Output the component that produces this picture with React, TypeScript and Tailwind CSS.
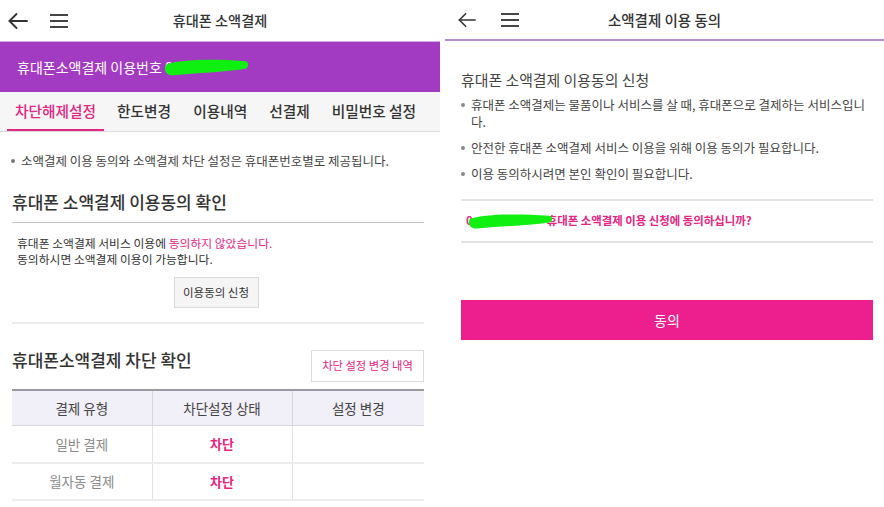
import React from "react";

const font = { fontFamily: '"Noto Sans CJK KR", "Noto Sans", sans-serif' };

function BackArrow({ w = 20 }: { w?: number }) {
  return (
    <svg width={w} height="16" viewBox="0 0 20 16" fill="none" stroke="#333" strokeWidth="1.8" strokeLinecap="round" strokeLinejoin="round">
      <path d="M19 8H1.5" />
      <path d="M8.5 1L1.5 8l7 7" />
    </svg>
  );
}

function Burger() {
  return (
    <svg width="18" height="14" viewBox="0 0 18 14" fill="none" stroke="#444" strokeWidth="1.8">
      <path d="M0 1h18M0 7h18M0 13h18" />
    </svg>
  );
}

// green marker blob that hides the phone number in the screenshot
function Redact({ w, h }: { w: number; h: number }) {
  return (
    <svg width={w} height={h} viewBox="0 0 100 24" preserveAspectRatio="none" className="absolute left-0 top-0">
      <path
        d="M4 9C20 3 55 2 96 5c4 1 4 7 0 9C70 18 40 19 12 22C3 23 0 14 4 9z"
        fill="#10f010"
      />
    </svg>
  );
}

function LeftScreen() {
  const tabs = ["차단해제설정", "한도변경", "이용내역", "선결제", "비밀번호 설정"];
  return (
    <div className="flex w-[440px] flex-col">
      <header className="flex h-[41px] items-center">
        <div className="flex w-[100px] items-center gap-[22px] pl-[8px]">
          <BackArrow />
          <Burger />
        </div>
        <h1 className="flex-1 text-center text-[14.2px] font-medium text-[#333]">휴대폰 소액결제</h1>
        <div className="w-[100px]" />
      </header>

      <div className="flex h-[51px] items-center border-t border-[#d9a6e6] bg-[#a33ac2] pl-[17px]">
        <span className="text-[14px] text-white">휴대폰소액결제 이용번호 0</span>
        <span className="relative -ml-[10px] h-[20px] w-[86px]">
          <Redact w={86} h={20} />
        </span>
      </div>

      <nav className="flex h-[40px] items-stretch border-b border-[#dcdcdc] bg-[#f6f6f6] pl-[7px]">
        {tabs.map((t, i) => (
          <div
            key={t}
            className={`flex items-center text-[14.7px] font-medium ${
              i === 0
                ? "mr-[13px] border-b-[2px] border-[#e5257f] px-[8px] pt-[2px] text-[#e5257f]"
                : "mr-[22px] text-[#333]"
            }`}
          >
            {t}
          </div>
        ))}
      </nav>

      <div className="flex flex-col pl-[12px] pr-[16px]">
        <p className="mt-[20px] flex items-center text-[12.5px] text-[#444]">
          <span className="ml-[-1px] mr-[6px] h-[4px] w-[4px] rounded-full bg-[#777]" />
          소액결제 이용 동의와 소액결제 차단 설정은 휴대폰번호별로 제공됩니다.
        </p>

        <h2 className="mt-[18px] text-[17px] font-medium leading-[26px] text-[#333]">휴대폰 소액결제 이용동의 확인</h2>
        <div className="mt-[7px] h-px bg-[#c4c4c4]" />
        <div className="mt-[12px] pl-[5px] text-[11.8px] leading-[16px] text-[#333]">
          <p>
            휴대폰 소액결제 서비스 이용에 <span className="text-[#e5257f]">동의하지 않았습니다.</span>
          </p>
          <p>동의하시면 소액결제 이용이 가능합니다.</p>
        </div>
        <div className="mt-[10px] flex justify-center">
          <button className="ml-[-4px] h-[31px] w-[85px] border border-[#dadada] bg-[#f5f5f5] text-[11.5px] text-[#333]">
            이용동의 신청
          </button>
        </div>
        <div className="mt-[14px] h-[2px] bg-[#ececec]" />

        <div className="mt-[24px] flex items-center justify-between">
          <h2 className="pb-[12px] text-[17px] font-medium leading-[24px] text-[#333]">휴대폰소액결제 차단 확인</h2>
          <button className="h-[32px] w-[113px] border border-[#dcdcdc] bg-white text-[11.3px] text-[#e5257f]">
            차단 설정 변경 내역
          </button>
        </div>

        <table className="mt-[5px] w-full border-collapse border-t-[2px] border-[#9a9a9a] text-[13.5px]">
          <thead>
            <tr className="h-[36px] bg-[#f1eff8] text-[#444]">
              <th className="w-[140px] border-b border-r border-[#d6d6de] font-normal">결제 유형</th>
              <th className="w-[140px] border-b border-r border-[#d6d6de] font-normal">차단설정 상태</th>
              <th className="border-b border-[#d6d6de] font-normal">설정 변경</th>
            </tr>
          </thead>
          <tbody>
            {["일반 결제", "월자동 결제"].map((r) => (
              <tr key={r} className="h-[37px] border-b-[2px] border-[#ececec]">
                <td className="border-r border-[#e2e2e2] text-center text-[#8a8a8a]">{r}</td>
                <td className="border-r border-[#e2e2e2] text-center text-[13px] font-bold text-[#e5257f]">차단</td>
                <td />
              </tr>
            ))}
          </tbody>
        </table>
      </div>
    </div>
  );
}

function RightScreen() {
  const bullets = [
    "휴대폰 소액결제는 물품이나 서비스를 살 때, 휴대폰으로 결제하는 서비스입니다.",
    "안전한 휴대폰 소액결제 서비스 이용을 위해 이용 동의가 필요합니다.",
    "이용 동의하시려면 본인 확인이 필요합니다.",
  ];
  return (
    <div className="ml-[5px] flex flex-1 flex-col">
      <header className="flex h-[41px] items-center border-b-[2px] border-[#b68fcb]">
        <div className="flex w-[100px] items-center gap-[25px] pl-[13px]">
          <BackArrow w={18} />
          <Burger />
        </div>
        <h1 className="flex-1 text-center text-[14.5px] font-medium text-[#333]">소액결제 이용 동의</h1>
        <div className="w-[100px]" />
      </header>

      <div className="flex flex-col pl-[16px] pr-[11px]">
        <h2 className="mt-[28px] text-[14.9px] leading-[22px] text-[#444]">휴대폰 소액결제 이용동의 신청</h2>
        <ul className="mt-[5px] flex flex-col gap-[9px] text-[12.5px] leading-[17px] text-[#444]">
          {bullets.map((b) => (
            <li key={b} className="flex">
              <span className="mr-[6px] mt-[7px] h-[4px] w-[4px] shrink-0 rounded-full bg-[#888]" />
              <span>{b}</span>
            </li>
          ))}
        </ul>

        <div className="mt-[17px] h-[2px] bg-[#e4e4e4]" />
        <p className="flex h-[40px] items-center pl-[5px] text-[11.4px] font-bold text-[#e5257f]">
          <span>0</span>
          <span className="relative -ml-[6px] h-[18px] w-[86px]">
            <Redact w={86} h={18} />
          </span>
          <span className="-ml-[6px]">휴대폰 소액결제 이용 신청에 동의하십니까?</span>
        </p>
        <div className="h-[2px] bg-[#e4e4e4]" />

        <button className="mt-[57px] h-[40px] w-full bg-[#ed1f8f] text-[14px] text-white">동의</button>
      </div>
    </div>
  );
}

export default function App() {
  return (
    <div className="flex h-[507px] w-[884px] overflow-hidden bg-white" style={font}>
      <LeftScreen />
      <RightScreen />
    </div>
  );
}
